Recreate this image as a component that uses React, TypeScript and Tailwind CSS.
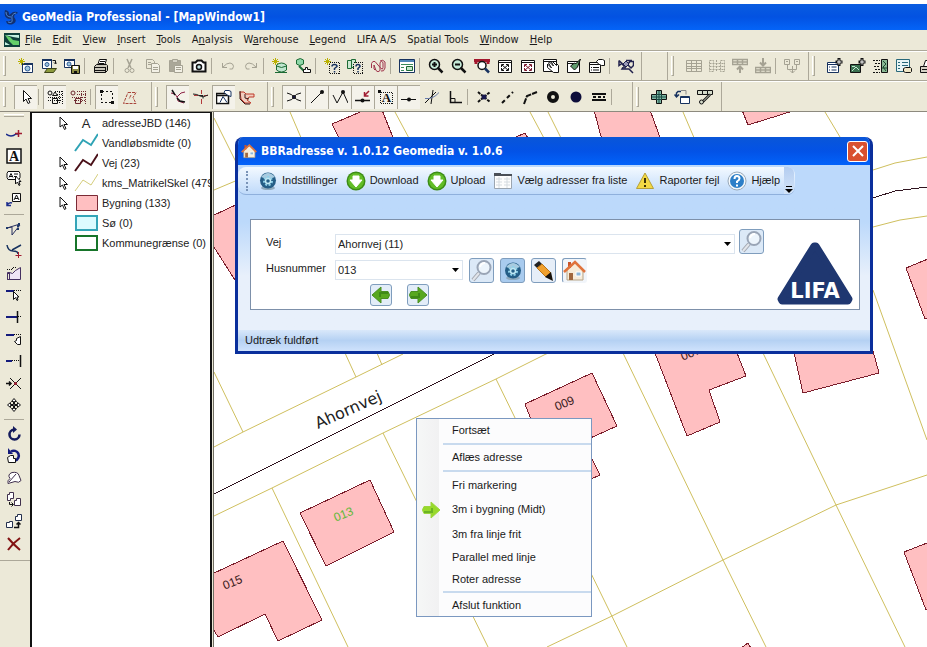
import type { ReactNode } from "react";

const Dots = ({ d }: { d: string }) => <path d={d} strokeDasharray="1 1" shapeRendering="crispEdges" />;

const globe = (
    <g>
        <path d="M4.500 5.500h10v9h-10z" fill="#fff" stroke="#17325f" />
        <path d="M4 6h11" stroke="#17325f" strokeWidth="2" />
        <circle cx="9.500" cy="10.500" r="2.500" stroke="#2d5a94" fill="#9fc4dc" />
    </g>
);

const star = <path d="M3.500 0v7M0 3.500h7M1 1l5 5M6 1L1 6" stroke="#b9b000" />;
const glass = <path d="M9.500 9.500l5 5" strokeWidth="2.500" />;

const icons: Record<string, ReactNode> = {
    New: <>{globe}{star}</>,
    Open: <><path d="M1.500 1.500h9v9h-9z" fill="#fff" stroke="#17325f" /><path d="M1 2h10" strokeWidth="2" stroke="#17325f" /><circle cx="6" cy="6.500" r="2" stroke="#2d5a94" fill="#9fc4dc" /><path d="M3.500 14.500l3-4h9l-3 4z" fill="#8c9a3c" stroke="#3d4418" /><path d="M11.500 2.500h3v3M13 4.500l1.500 1.500L16 4.500" /></>,
    Save: <><path d="M.5 1.500h10v8H.5z" fill="#fff" stroke="#17325f" /><path d="M0 2h11" strokeWidth="2" stroke="#17325f" /><circle cx="5" cy="6" r="2" stroke="#2d5a94" fill="#9fc4dc" /><path d="M7.500 7.500h8v8h-8z" fill="#8c8c45" /><path d="M9 8h5v3H9z" fill="#fff" stroke="none" /><path d="M10 13h3v2h-3z" fill="#111" stroke="none" /></>,
    Print: <><path d="M4.500 7.500L6.500 1.500h7l-2 6z" fill="#fff" /><path d="M1.500 8.500l2-2h10l1 1v5l-2 2h-11z" fill="#c9c6ba" /><path d="M1 9.500h12M7 3.500h5M6 5.500h5M1 12.500h12M12.500 9.500v5" /></>,
    Cut: <g stroke="#a5a293"><path d="M5 1l4 9M10 1L6 10" strokeWidth="1.500" /><circle cx="5" cy="12.500" r="2" /><circle cx="10" cy="12.500" r="2" /></g>,
    Copy: <g stroke="#a5a293"><path d="M1.500 1.500h6l2 2v7h-8z" /><path d="M6.500 5.500h6l2 2v7h-8z" fill="#f3f1e6" /><path d="M3 4.500h3M3 6.500h3M8 9.500h5M8 11.500h5" /></g>,
    Paste: <g stroke="#a5a293"><path d="M1.500 2.500h11v11h-11z" fill="#aaa798" /><path d="M4.500 1.500h5v3h-5z" fill="#d5d2c5" /><path d="M6.500 7.500h8v7h-8z" fill="#f3f1e6" /><path d="M8 9.500h5M8 11.500h5" /></g>,
    Camera: <><path d="M1.500 4.500h3l2-2h4l2 2h2v9h-13z" fill="#fff" strokeWidth="2" /><circle cx="8" cy="9" r="2.500" strokeWidth="1.500" fill="#c3e2e4" /></>,
    Undo: <path d="M2.500 5v4.500H7M2.500 9.500l4-3.500q4-2 6 0t0 5h-3" stroke="#a5a293" />,
    Redo: <path d="M13.500 5v4.500H9M13.500 9.500l-4-3.500q-4-2-6 0t0 5h3" stroke="#a5a293" />,
    Connect: <><path d="M4.500 7q5-4 10 0v5q-5 4-10 0z" fill="#bfe5cf" stroke="#1c6b35" /><path d="M4.500 8q5 3 10 0M3 14.500h12" stroke="#1c6b35" />{star}</>,
    Feature: <><path d="M1.500 2q4-3 7 0v4q-4 3-7 0z" fill="#8fd6a8" stroke="#1c6b35" /><path d="M4 8l5 5" stroke="#1c6b35" strokeWidth="2" /><path d="M8.500 14.500v-3h2v-2h2v2h3v3z" fill="#fff" /></>,
    Query: <><Dots d="M5.500 4.500h10v11h-10z" /><path d="M8 8.500q0-2 2.500-2t2.500 2l-2.500 2v1.500M10.500 13v1.500" stroke="#17325f" strokeWidth="1.500" />{star}</>,
    Queries: <><path d="M.5 2.500h4v8h-4zM4.500 1.500h4v8h-4z" stroke="#1c6b35" fill="#cbe8d2" /><path d="M7 5h8v10H7z" fill="#ece9d8" stroke="none" /><Dots d="M6.500 4.500h9v11h-9z" /><path d="M9 8.500q0-2 2-2t2 2l-2 2v1.500M11 13v1.500" stroke="#17325f" strokeWidth="1.500" /></>,
    Link: <path d="M1.500 10V5.500q1-3 3.500-2l6 7q2 1.500 2-1V4.500q-1.500-2-3 0v8q-2 2.500-4 0L4 7v4q1 2 2 0M10 3q3-2 5 1v6q-1 4-4 3" stroke="#a0334a" />,
    Legend: <><path d="M.5 1.500h15v13H.5z" fill="#fff" stroke="#17325f" /><path d="M1 3h14" stroke="#4f86b8" strokeWidth="2" /><path d="M2 6.500h12M2 9.500h3M2 12.500h3" stroke="#3b8a5a" /><path d="M7.500 8.500h6v4h-6z" fill="#c7e5cc" stroke="#1c6b35" /></>,
    ZoomIn: <><circle cx="6.500" cy="6.500" r="5" strokeWidth="1.500" fill="#c5ead8" />{glass}<path d="M6.500 4v5M4 6.500h5" strokeWidth="2" /></>,
    ZoomOut: <><circle cx="6.500" cy="6.500" r="5" strokeWidth="1.500" fill="#c5ead8" />{glass}<path d="M4 6.500h5" strokeWidth="2" /></>,
    ZoomArea: <><path d="M0 2.500h16M2 1v5M14 1v5" stroke="#a3182e" strokeWidth="3" /><circle cx="8" cy="7.500" r="4" fill="#fff" strokeWidth="1.500" /><path d="M11 10.500l4 4" strokeWidth="2.500" stroke="#17325f" /></>,
    Fit: <><path d="M1.500 2.500h13v12h-13zM1 4.500h14" fill="#fff" /><path d="M5 7l6 5M11 7l-6 5M4.500 9V6.500H7M9 6.500h2.500V9M4.500 10v2.500H7M11.500 10v2.500H9" /></>,
    FitAll: <><path d="M1.500 2.500h13v12h-13zM1 4.500h14" fill="#fff" /><path d="M5 7l6 5M11 7l-6 5M4.500 9V6.500H7M9 6.500h2.500V9M4.500 10v2.500H7M11.500 10v2.500H9" stroke="#7c1b30" /></>,
    Pan: <><path d="M.5 1.500h13v12H.5zM1 3.500h12" fill="#fff" /><path d="M4.500 6l4 4-3-5 1-1 4 4-2-4 1-.5 4 4v-2l2 2v7h-5l-6-5z" fill="#fff" /></>,
    Redraw: <><path d="M1.500 3.500h12v11h-12zM1 5.500h12" fill="#fff" /><path d="M4.500 8l4 4 3-3 3-8-5 5-1-1z" fill="#5f9a6c" /></>,
    Properties: <><path d="M.5 4.500h11v10H.5zM1 6.500h10" fill="#fff" /><path d="M2 9.500h1M4 9.500h6M2 12h1M4 12h6" /><path d="M7.500 3.500l2-2h4l2 1v5h-3l-3-1.500z" fill="#fff" /></>,
    Measure: <><path d="M1 2.500v5l3-2 3 4 5-6h3.500v4L13 10 8 5 4 11l7 0 4 4M1 2.500l4 4M8 2.500h6" stroke="#22224d" strokeWidth="1.500" /><path d="M5 6l3-3 3 3-3 3z" fill="#9a9ab8" stroke="#22224d" /></>,
    Table: <path d="M.5 2.500h15v11H.5zM.5 5.500h15M.5 8.500h15M.5 10.500h15M5.500 3v10M10.500 3v10" stroke="#a5a293" />,
    Columns: <path d="M.5 2.500h4v11h-4zM11.500 2.500h4v11h-4zM.5 5.500h15M.5 8.500h15M.5 11.500h15M7.500 2v12" stroke="#a5a293" strokeDasharray="2 1" />,
    RowUp: <g stroke="#a5a293"><path d="M.5 1.500h15v5H.5zM.5 4h15M5.500 2v4M10.500 2v4" strokeWidth="1.500" /><path d="M8 9v6M5 11.500l3-3 3 3" strokeWidth="2" /></g>,
    RowDown: <g stroke="#a5a293"><path d="M.5 9.500h15v5H.5zM.5 12h15M5.500 10v4M10.500 10v4" strokeWidth="1.500" /><path d="M8 0v7M5 4.500l3 3 3-3" strokeWidth="2" /></g>,
    Join: <path d="M.5 1.500h5v5h-5zM10.500 1.500h5v5h-5zM3.500 7v4.500h9V7M8.500 8v7M6 12.500l2.500 2.500 2.500-2.500M2 3.500h2M12 3.500h2" stroke="#a5a293" />,
    AddList: <><path d="M.5 4.500h11v10H.5zM1 6.500h10" fill="#fff" stroke="#17325f" /><path d="M2 9h1M4.500 9h5M2 12h1M4.500 12h5" stroke="#17325f" /><path d="M12 0v8M8.500 4h7" strokeWidth="3" /><path d="M12 1.500v5M10 4h4.500" stroke="#fff" /></>,
    AddImage: <><path d="M.5 6.500h10v8H.5z" fill="#3a7050" /><path d="M2 13l4-4 3 3M2 8.500h3" stroke="#bfe5cf" /><path d="M12 0v8M8.500 4h7" strokeWidth="3" /><path d="M12 1.500v5M10 4h4.500" stroke="#fff" /></>,
    Align: <><path d="M0 2.500h7M2 5.500h5M1 8.500h6M2 11.500h5M0 14.500h7" strokeDasharray="2 1" /><path d="M8.500 1.500h6v13h-6z" fill="#8ab894" /><path d="M10 3l3 3-3 3 3 4M9 10h5" stroke="#1d4a2c" /></>,
    FormList: <><path d="M.5 1.500h13v12H.5z" fill="#e8f5f5" stroke="#28687a" /><path d="M2 4.500h2M6 4.500h6M2 7.500h2M6 7.500h6M2 10.500h2" stroke="#28687a" /><path d="M7.500 10.500l2-1h5l1 1v3l-1 1h-5l-2-1z" fill="#eee5c5" /></>,
    PrintSet: <><path d="M4.500 8.500l2-6h6l-1 6z" fill="#fff" /><path d="M1.500 8.500h13v6h-13zM3 11.500h9" fill="#d5d2c5" /></>,
    Cursor: <path d="M5.500 1.500v11l2.500-2.500 2 4.500 2-1-2-4h3.500z" fill="#fff" />,
    SelectSet: <><circle cx="3" cy="4" r="2" /><path d="M8 3l2.500 3.500h-5zM5.500 9.500h5v5h-5z" /><Dots d="M8 2.500h8M15.500 2v13M10 5.500h6M1 8.500h14M1 11.500h14M12.500 3v12" /></>,
    SelectRed: <g stroke="#6e2a30"><circle cx="3" cy="4" r="2" /><path d="M5.500 9.500h5v5h-5z" /><Dots d="M7 2.500h9M7 5.500h9M15.500 2v13M2 8.500h14M4 11.500h11M11.500 4v9" /></g>,
    Fence: <><path d="M2.500 2.500h11v11h-11z" strokeDasharray="2 2" shapeRendering="crispEdges" /><path d="M1 1h3v3H1zM12 12h3v3h-3z" fill="#111" stroke="none" /></>,
    Poly: <path d="M6 3.500h8l-3 5 3 6H1.500zM9 6l-2 4" stroke="#a8443a" strokeDasharray="3 1" />,
    SnapCurve: <><path d="M1 4l4 1 2 3 4-4 4-1M7 8l1 4 6 2" stroke="#8c2045" /><path d="M2 1l3 5M7 9l3 3 5 1" strokeWidth="1.500" /></>,
    SnapCross: <><path d="M8.500 1v4M8.500 10v5M1 6.500h4M11 6.500h4" stroke="#b33a3a" /><path d="M0 5q4 0 7 2t8-1M6 6.500h4v3" stroke="#222" /></>,
    SnapProps: <><path d="M.5 4.500h12v10H.5zM1 6.500h11" fill="#fff" strokeWidth="1.500" /><path d="M4 13.500l3-6 4 6M8 3.500l1-2h4l2 1v5l-3-1z" fill="#fff" stroke="#17325f" /></>,
    Region: <><path d="M1 3h4l2 2h8v3h-5l-2 3 4 3H6l-4-4z" stroke="#bf3a2a" fill="#f1cdbf" /><path d="M1 2v8l5 5h5M6 5v4l4 1" stroke="#3a1a18" /></>,
    SnapX: <><path d="M1 4q5 1 7 4t7 4M1 12q6-1 7-4t7-4" /><circle cx="8" cy="8" r="1.500" fill="#17174d" /></>,
    SnapEnd: <><path d="M2 14L13 3" /><circle cx="13" cy="3" r="2" fill="#111" stroke="none" /></>,
    SnapVertex: <><path d="M1 6l4 8 6-11 5 11" /><circle cx="11" cy="3" r="2" fill="#111" stroke="none" /></>,
    SnapNear: <><path d="M0 11.500h15" strokeWidth="1.500" /><circle cx="7.500" cy="11.500" r="2" fill="#111" stroke="none" /><path d="M14 2L9.500 6.500M9.500 3v4h4" stroke="#a01b30" strokeWidth="1.500" /></>,
    SnapText: <><Dots d="M2.500 3.500h12v11h-12z" /><path d="M0 1h3v3H0z" fill="#111" stroke="none" /><text x="8.500" y="13" textAnchor="middle" fontFamily="Liberation Serif, serif" fontWeight="bold" fontSize="13" fill="#111" stroke="none">A</text></>,
    SnapMid: <><path d="M0 10.500h15" /><circle cx="8" cy="10.500" r="2" fill="#111" stroke="none" /></>,
    SnapTangent: <><path d="M1 14L12 3M9 1L7 15" /><path d="M1 9.500q8 1 14-6" stroke="#6579a9" /></>,
    SnapPerp: <><path d="M3.500 2v11.500H15" strokeWidth="1.500" /><path d="M4 9.500h4v4" /></>,
    Cross: <><path d="M2 3l12 10M2 13L14 3" strokeWidth="2" strokeDasharray="3 1" /><circle cx="8" cy="8" r="2.500" fill="#17174d" stroke="none" /></>,
    Segment: <path d="M3 14L14 3" strokeWidth="2" strokeDasharray="4 3" />,
    Elbow: <path d="M2 15L5 7l10-4" strokeWidth="2" strokeDasharray="6 1" />,
    Ring: <circle cx="8" cy="8" r="4" strokeWidth="4" />,
    Disc: <circle cx="8" cy="8" r="5.500" fill="#0d0d3a" stroke="none" />,
    Bars: <><path d="M1 5h14M1 11h14" strokeWidth="2" /><path d="M2 8h12" strokeWidth="2" strokeDasharray="3 2" /></>,
    Move3: <><path d="M5.500 1.500h5v4h5v5h-5v4h-5v-4h-5v-5h5z" fill="#7db6a3" /><path d="M1 8h14M8 2v12M5.500 5.500h5v5h-5z" stroke="#1a4a44" /></>,
    Swap: <><path d="M6.500 7.500h9v7h-9zM6.500 8.500h9" fill="#fff" stroke="#17325f" /><path d="M7 2.500H4L2.500 4v4M.5 5.500l2 2.500 2.500-2.500" stroke="#17325f" strokeWidth="1.500" /><path d="M7 1.500h5v4" stroke="#8a8a88" /></>,
    Chain: <><path d="M.5 1.500h5v4h-5zM5.500 1.500h5v4h-5zM10.500 1.500h5v4h-5z" fill="#d6dccb" /><path d="M13 5.500l-7 7" strokeWidth="2.500" /><path d="M13 5.500l-7 7" stroke="#d6dccb" /><circle cx="4.500" cy="13" r="2" fill="#d6dccb" /></>,
    EditLine: <><path d="M0 8q5 4 10 0h2" stroke="#1c2d8c" strokeWidth="1.500" /><path d="M12.500 4v7M9 7.500h7" stroke="#a01b30" strokeWidth="1.500" /></>,
    TextBox: <><path d="M1 1h14v14H1z" fill="#fff" strokeWidth="1.500" /><text x="8" y="13" textAnchor="middle" fontFamily="Liberation Serif, serif" fontWeight="bold" fontSize="14" fill="#111" stroke="none">A</text></>,
    TextSelect: <><path d="M2 1.500h11l1 2v4l-1 2H2l-1-2v-4z" fill="#fff" /><path d="M3 7.500l2-4 2 4M4 6.500h2M8 4h4M8 6.500h3" /><path d="M9.500 6v8l2-2 1.500 3.500 1-.5-1-3.500H15z" fill="#fff" /></>,
    Leader: <><path d="M6.500 1.500h8v8h-8z" fill="#fff" /><path d="M8 8l2.500-5L13 8M9 6.500h3" /><path d="M6 11q-3-1-5 2M1 10v3.500h4" stroke="#1c2d8c" strokeWidth="1.500" /></>,
    Vertex: <><path d="M1 7l5-1v8M6 14l8-10M1 7l13-4" stroke="#283060" /><path d="M12 9V3h3M0 7h3" strokeWidth="2" stroke="#203a6b" strokeDasharray="2 1" /></>,
    Curve: <><path d="M1 2q1 6 6 6t5 3M6 7l9-5" stroke="#17325f" strokeWidth="1.500" /><path d="M12.500 9v6M9.500 12.500h6" stroke="#a01b30" /></>,
    Area: <><path d="M1.500 7.500l2 0v7h-2zM1.500 14.500h13v-12l-5 3-3 3-3-1-2 2z" fill="#f0e6f5" stroke="#453061" /><Dots d="M1 4.500h5V2h5" /></>,
    Trim: <><path d="M0 4h8" stroke="#141b7c" strokeWidth="2" /><Dots d="M8 3.500h8" /><path d="M7.500 4.500v8l2-2 1.500 3 1-.5-1-3h2z" fill="#fff" /></>,
    Extend: <><path d="M0 8h11" stroke="#141b7c" strokeWidth="2" /><path d="M11.500 2v12" strokeWidth="1.500" /><Dots d="M12 7.500h4" /></>,
    Split: <><path d="M0 4h8" stroke="#141b7c" strokeWidth="2" /><Dots d="M8 3.500h8" /><path d="M10.500 7.500l4-2v8h-3l-3-3 2-1z" fill="#fff" /></>,
    ExtendTo: <><path d="M0 8h6" stroke="#141b7c" strokeWidth="2" /><Dots d="M6 7.500h8" /><path d="M14.500 2v12" strokeWidth="1.500" /></>,
    Break: <><path d="M4 3l11 11M15 3L4 14" /><path d="M0 8.500h5M3 6.500l2 2-2 2" strokeWidth="1.500" /><circle cx="9.500" cy="8.500" r="1.500" fill="#a01b30" stroke="none" /></>,
    MoveAll: <path d="M8 1.500l2.500 3h-2v3h3v-2l3 2.500-3 2.500v-2h-3v3h2L8 14.500l-2.500-3h2v-3h-3v2L1.500 8l3-2.500v2h3v-3h-2z" fill="#fff" />,
    Rotate: <><path d="M8 3.500a5 5 0 1 0 5.500 5" stroke="#141b5c" strokeWidth="2.500" /><path d="M7 0v7l4-3.500z" fill="#141b5c" stroke="none" /></>,
    RotateCopy: <><path d="M5 3.500a5 5 0 1 1 4 9" stroke="#141b7c" strokeWidth="2.500" /><path d="M2 0v6h5z" fill="#141b7c" stroke="none" /><path d="M1.500 9.500l3-2h3v3h2v4h-7z" fill="#fff" /></>,
    Reshape: <><path d="M2 13.500q-1-3 2-5-3-4 2-6 6-1 7 3l2 5q-2 3-6 1z" stroke="#40304d" fill="#fff" /><path d="M3 12l7-8" stroke="#40304d" /></>,
    CopyShape: <><path d="M1.500 2.500h2v-2h4v6h-3v2h-3zM8.500 8.500h2v-2h4v7h-6z" fill="#fff" stroke="#40304d" /><path d="M3.500 10v2.500H7M5.500 10.500l2 2-2 2" /></>,
    MoveShape: <><path d="M.5 8.500h3v-1h3v6h-6zM9.500 2.500h2v-2h4v6h-6z" fill="#fff" stroke="#24304d" /><path d="M8 13.500h4.500V9M10.500 10.500l2-2 2 2" strokeWidth="1.500" /></>,
    Delete: <path d="M2 2q5 6 12 12M14 2Q7 7 2 14" stroke="#831313" strokeWidth="2" />,
};

function Icon({ name }: { name: string }) {
    return (
        <svg className="size-4 shrink-0" viewBox="0 0 16 16" fill="none" stroke="#111" aria-hidden="true">
            {icons[name]}
        </svg>
    );
}

// "|" draws a separator, a leading "*" a pressed button
function Tools({ items, vertical }: { items: string[]; vertical?: boolean }) {
    return (
        <>
            {items.map((item, i) => {
                if (item === "|") {
                    return vertical
                        ? <div key={i} className="mx-1 my-[3px] h-px w-5 shrink-0 bg-[#aca899]" />
                        : <div key={i} className="mr-1 ml-px h-4 w-px shrink-0 bg-[#aca899]" />;
                }
                const pressed = item.startsWith("*");
                const name = item.replace("*", "");
                const size = vertical ? "h-[22px] w-7" : "h-6 w-[23px]";
                const look = pressed ? "border-t border-l border-[#aca899] bg-[#f4f2ea]" : "";
                return (
                    <button key={i} type="button" aria-label={name} className={`flex shrink-0 items-center justify-center ${size} ${look}`}>
                        <Icon name={name} />
                    </button>
                );
            })}
        </>
    );
}

function Band({ items, className }: { items: string[]; className: string }) {
    return (
        <div className={`flex h-full shrink-0 items-center border-r border-[#aca899] ${className}`}>
            <div className="mr-2 ml-[3px] h-5 w-[3px] border-r border-b border-l border-r-[#aca899] border-b-[#aca899] border-l-white" />
            <Tools items={items} />
        </div>
    );
}

const menus = [
    ["", "F", "ile"], ["", "E", "dit"], ["", "V", "iew"], ["", "I", "nsert"], ["", "T", "ools"], ["A", "n", "alysis"],
    ["W", "a", "rehouse"], ["", "L", "egend"], ["LIFA A/S", "", ""], ["Spatial Tools", "", ""], ["", "W", "indow"], ["", "H", "elp"],
];

const Arrow = () => (
    <svg className="h-4 w-3" viewBox="0 0 12 16" fill="#fff" stroke="#111" aria-hidden="true">
        <path d="M2 2v10l2.500-2 2 4.500 1.500-1-2-4h3.500z" />
    </svg>
);

const layers = [
    { label: "adresseJBD (146)", arrow: true, kind: "text", color: "#222", fill: "none" },
    { label: "Vandløbsmidte (0)", arrow: false, kind: "line", color: "#2fa3b5", fill: "none" },
    { label: "Vej (23)", arrow: true, kind: "line", color: "#4a1018", fill: "none" },
    { label: "kms_MatrikelSkel (479)", arrow: true, kind: "thin", color: "#d5cd7c", fill: "none" },
    { label: "Bygning (133)", arrow: true, kind: "box", color: "#7a2a35", fill: "#ffbfc1" },
    { label: "Sø (0)", arrow: false, kind: "thick", color: "#35a5b8", fill: "#dcfbff" },
    { label: "Kommunegrænse (0)", arrow: false, kind: "thick", color: "#17752a", fill: "#fff" },
];

function LegendPanel() {
    return (
        <aside className="w-[182px] shrink-0 overflow-hidden border-x-2 border-t border-[#111] bg-white">
            {layers.map((l) => (
                <div key={l.label} className="flex h-5 items-center pl-[26px] text-[11px] whitespace-nowrap text-[#222]">
                    <div className="w-4 shrink-0">{l.arrow && <Arrow />}</div>
                    <svg className="mr-1 h-5 w-6 shrink-0" viewBox="0 0 24 20" fill={l.fill} stroke={l.color} aria-hidden="true">
                        {l.kind === "text" && <text x="12" y="15" textAnchor="middle" fontSize="13" fill={l.color} stroke="none">A</text>}
                        {l.kind === "line" && <path d="M1 18l8-11 8 5 7-11" strokeWidth="2" />}
                        {l.kind === "thin" && <path d="M1 18l8-11 8 5 7-11" />}
                        {l.kind === "box" && <path d="M2.500 2.500h21v15h-21z" />}
                        {l.kind === "thick" && <path d="M2 3h21v14H2z" strokeWidth="2" />}
                    </svg>
                    <span>{l.label}</span>
                </div>
            ))}
        </aside>
    );
}

const parcels = [
    "M214 447L243 432 356 377 403 354M214 372L243 432M345 353L356 377M377 353L382 365",
    "M214 516L272 488 383 433 496 379 546 354 873 227 900 220 927 216",
    "M272 488L348 647M383 433L488 647M496 379L627 647",
    "M547 647L612 616 723 560 836 505 927 475",
    "M623 353L723 560 766 647M763 353L836 505 905 647M873 290L927 440",
    "M214 190L290 158M214 118L240 170M290 112L302 140M395 112L410 140M530 112L545 140M548 112L562 140M683 112L695 140M825 112L840 137",
    "M873 170L895 163 927 157",
];

const buildings = [
    "M300 513L370 480 394 532 326 566z",
    "M212 574L283 541 322 620 278 641 265 614 218 637 212 627z",
    "M525 404L592 373 617 426 546 458z",
    "M580 436L600 475 580 484z",
    "M650 340L687 436 720 422 709 390 746 376 730 335z",
    "M790 335L803 393 879 373 870 340z",
    "M940 254L906 268 925 319 940 314z",
    "M940 538L904 552 926 610 940 605z",
    "M738 650L748 643 752 650z",
    "M332 124L365 110H382L394 140H340z",
    "M594 110H650L661 140H602z",
    "M742 110L748 125 796 110z",
    "M212 216L240 203V288L212 244z",
    "M505 142L525 133 530 142z",
];

function MapView() {
    return (
        <svg className="absolute inset-0 h-full w-full" fill="none" aria-label="Kort">
            <g transform="translate(-214 -112)">
                {parcels.map((d) => <path key={d} d={d} stroke="#cfbf5e" />)}
                {buildings.map((d) => <path key={d} d={d} fill="#ffbfc1" stroke="#7a1e2c" shapeRendering="crispEdges" />)}
                <path d="M214 494L410 396 494 354 820 215 873 198 895 191 927 187" stroke="#301520" shapeRendering="crispEdges" />
                <g fontFamily="Liberation Sans, sans-serif" fontSize="12" textAnchor="middle" fill="#3b1a20">
                    <text transform="translate(566 407) rotate(-22)">009</text>
                    <text transform="translate(345 518) rotate(-22)" fill="#62b83a">013</text>
                    <text transform="translate(234 586) rotate(-22)">015</text>
                    <text transform="translate(692 357) rotate(-22)">007</text>
                </g>
                <text transform="translate(318 429) rotate(-24)" fontFamily="DejaVu Sans, sans-serif" fontSize="16" fill="#222">Ahornvej</text>
            </g>
        </svg>
    );
}

const Gear = () => (
    <svg className="size-5" viewBox="0 0 20 20" aria-hidden="true">
        <ellipse cx="10" cy="17" rx="7" ry="2" fill="#8fa9bd" />
        <circle cx="10" cy="9.500" r="8" fill="#245d86" />
        <path d="M3 6q7-8 14 0-7 3-14 0z" fill="#a8cbe0" />
        <circle cx="10" cy="10" r="4" fill="none" stroke="#8ed0e8" strokeWidth="2" strokeDasharray="2 1.500" />
        <circle cx="10" cy="10" r="2.500" fill="#245d86" stroke="#bfe8f4" strokeWidth="1.500" />
    </svg>
);

const Down = () => (
    <svg className="size-5" viewBox="0 0 20 20" aria-hidden="true">
        <circle cx="10" cy="10" r="9.500" fill="#3c8c16" />
        <circle cx="10" cy="10" r="8" fill="#62bd27" />
        <path d="M7 5h6v4h3l-6 7-6-7h3z" fill="#fff" stroke="#fff" strokeLinejoin="round" />
    </svg>
);

const Sheet = () => (
    <svg className="size-5" viewBox="0 0 20 20" aria-hidden="true">
        <path d="M1.500 4.500h17v13h-17z" fill="#fdfdfd" stroke="#9ba5b0" />
        <path d="M1 2h7v3H1zM8 3h11v2H8z" fill="#4a4f57" />
        <path d="M3 8h6M3 11h6M3 14h6M11 8h6M11 11h6M11 14h6M6 6v11M14 6v11" stroke="#d5dbe0" />
    </svg>
);

const Warning = () => (
    <svg className="size-5" viewBox="0 0 20 20" aria-hidden="true">
        <path d="M10 2L1.500 17.500h17z" fill="#f3d943" stroke="#b5a03a" strokeLinejoin="round" />
        <path d="M10 7v5M10 14v2" stroke="#3d3206" strokeWidth="2" />
    </svg>
);

const Help = () => (
    <svg className="size-5" viewBox="0 0 20 20" aria-hidden="true">
        <circle cx="10" cy="10" r="9" fill="#f4f8fb" stroke="#98a8b8" />
        <circle cx="10" cy="10" r="7" fill="#2d7fc8" />
        <path d="M7.500 8q0-3 2.500-3t2.500 2.500q0 1.500-2.500 3V12M10 13.500v2" fill="none" stroke="#fff" strokeWidth="2" />
    </svg>
);

const Magnifier = () => (
    <svg className="size-[23px]" viewBox="0 0 23 23" aria-hidden="true">
        <path d="M9 14l-6 7" stroke="#a2a7b0" strokeWidth="4" />
        <path d="M9 14l-6 7" stroke="#e2e5ea" strokeWidth="2" />
        <circle cx="14" cy="8.500" r="6.500" fill="#edf5fc" stroke="#9aa5b6" strokeWidth="2" />
        <path d="M10 8q1-4 5-4" fill="none" stroke="#fff" strokeWidth="2" />
    </svg>
);

const Pencil = () => (
    <svg className="size-[23px]" viewBox="0 0 23 23" aria-hidden="true">
        <path d="M2 6l5-4 4 4-5 4z" fill="#222" />
        <path d="M5 9l5-4 9 9-5 4z" fill="#f0a02e" stroke="#b97316" />
        <path d="M13 18l6-5 2 9z" fill="#17110a" />
    </svg>
);

const House = ({ className }: { className: string }) => (
    <svg className={className} viewBox="0 0 23 23" aria-hidden="true">
        <path d="M4 11l8-7 8 7v10H4z" fill="#f7ecd9" stroke="#b7a588" />
        <path d="M5 3h3v6H5z" fill="#c9552c" />
        <path d="M1 13L12 3l10 10" fill="none" stroke="#e0743d" strokeWidth="2.500" />
        <path d="M6 14h4v7H6z" fill="#a0673d" />
        <path d="M13 13h5v4h-5z" fill="#8fb8d8" stroke="#fff" />
    </svg>
);

const GreenArrow = ({ flip, bright }: { flip?: boolean; bright?: boolean }) => (
    <svg className={flip ? "h-5 w-5 rotate-180" : "h-5 w-5"} viewBox="0 0 20 20" aria-hidden="true">
        <path d="M3 6.500h7V2l9 8-9 8v-4.500H3q-3-3.500 0-7z" fill={bright ? "#97d92b" : "#58a820"} stroke={bright ? "#9bd63c" : "#4a8f22"} />
        <path d="M3 12h8V8" fill="none" stroke={bright ? "#6bb324" : "#3f8a18"} strokeWidth="2" />
    </svg>
);

const strip = [
    { label: "Indstillinger", icon: <Gear /> },
    { label: "Download", icon: <Down /> },
    { label: "Upload", icon: <Down /> },
    { label: "Vælg adresser fra liste", icon: <Sheet /> },
    { label: "Raporter fejl", icon: <Warning /> },
    { label: "Hjælp", icon: <Help /> },
];

function ToolButton({ label, className, children }: { label: string; className: string; children: ReactNode }) {
    return (
        <button type="button" aria-label={label} className={`flex shrink-0 items-center justify-center rounded-[3px] border border-[#7f9dbd] ${className}`}>
            {children}
        </button>
    );
}

function Combo({ id, value, className }: { id: string; value: string; className: string }) {
    return (
        <div className={`relative h-5 ${className}`}>
            <select id={id} className="h-full w-full appearance-none border border-[#dbe4ee] bg-white px-[2px] text-[11px] text-[#222]">
                <option>{value}</option>
            </select>
            <svg className="pointer-events-none absolute top-2 right-1 h-1 w-[7px]" viewBox="0 0 7 4" aria-hidden="true">
                <path d="M0 0h7L3.500 4z" fill="#000" />
            </svg>
        </div>
    );
}

function AddressDialog() {
    return (
        <section className="absolute top-[25px] left-[21px] flex h-[217px] w-[638px] flex-col overflow-hidden rounded-t-lg border-x-[3px] border-b-[3px] border-[#0a2f9c] bg-[#bcd9fb]">
            <header className="-mx-[2px] flex h-7 shrink-0 items-center bg-linear-to-b from-[#0a56d8] via-[#0352e6] to-[#0262fa] pr-1 pl-[5px]">
                <House className="size-4" />
                <h2 className="ml-1 flex-1 font-['DejaVu_Sans_Condensed','DejaVu_Sans',sans-serif] text-xs font-bold text-white">BBRadresse v. 1.0.12 Geomedia v. 1.0.6</h2>
                <button type="button" aria-label="Luk" className="flex size-[21px] items-center justify-center rounded-[3px] border border-white bg-[#d9512f]">
                    <svg className="size-3" viewBox="0 0 12 12" stroke="#fff" strokeWidth="2" aria-hidden="true"><path d="M1 1l10 10M11 1L1 11" /></svg>
                </button>
            </header>
            <nav className="mt-[2px] flex h-7 w-[557px] shrink-0 items-center rounded-lg border-b border-[#8fb0dc] bg-linear-to-b from-[#f3f9ff] to-[#bfdafa] pl-2">
                <div className="mr-[10px] h-5 border-l-2 border-dotted border-[#7a94b8]" />
                {strip.map((s) => (
                    <button key={s.label} type="button" className="mr-2 flex shrink-0 items-center gap-1 whitespace-nowrap">
                        {s.icon}
                        <span>{s.label}</span>
                    </button>
                ))}
                <button type="button" aria-label="Mere" className="-ml-1 flex h-full w-[10px] shrink-0 flex-col items-center justify-end rounded-r-md bg-linear-to-b from-[#b4cdf0] to-[#d3e4f8]">
                    <svg className="h-2 w-2" viewBox="0 0 8 8" aria-hidden="true"><path d="M1 0h6v1H1zM0 3h8L4 7z" fill="#000" /></svg>
                </button>
            </nav>
            <div className="flex flex-1 flex-col bg-linear-to-b from-[#bcd9fb] from-20% to-[#e8f0fb] to-60% pt-6">
                <form className="mr-[10px] ml-3 flex h-[91px] border border-[#7d90aa] bg-white">
                    <div className="flex flex-1 flex-col pt-[9px] pl-[15px]">
                        <div className="flex h-[29px]">
                            <label htmlFor="vej" className="w-[69px] pt-[5px]">Vej</label>
                            <Combo id="vej" value="Ahornvej (11)" className="mt-[5px] w-[400px]" />
                            <ToolButton label="Søg vej" className="ml-1 size-[25px] bg-[#dce9f7]"><Magnifier /></ToolButton>
                        </div>
                        <div className="flex h-[26px] items-start">
                            <label htmlFor="nr" className="w-[69px] pt-[2px]">Husnummer</label>
                            <Combo id="nr" value="013" className="mt-[2px] w-32" />
                            <div className="ml-[6px] flex gap-[6px]">
                                <ToolButton label="Søg nummer" className="size-[25px] bg-[#dce9f7]"><Magnifier /></ToolButton>
                                <ToolButton label="Indstil" className="size-[25px] bg-[#a9cbee]"><Gear /></ToolButton>
                                <ToolButton label="Rediger" className="size-[25px] bg-[#e6eef8]"><Pencil /></ToolButton>
                                <ToolButton label="Hus" className="size-[25px] border-r-transparent border-b-transparent bg-[#f1f5fa]"><House className="size-[23px]" /></ToolButton>
                            </div>
                        </div>
                        <div className="ml-[104px] flex gap-[15px]">
                            <ToolButton label="Forrige" className="size-[22px] bg-[#e3edf8]"><GreenArrow flip /></ToolButton>
                            <ToolButton label="Næste" className="size-[22px] bg-[#e3edf8]"><GreenArrow /></ToolButton>
                        </div>
                    </div>
                    <svg className="mt-[22px] mr-[5px] h-16 w-[78px] shrink-0" viewBox="0 0 78 64" role="img" aria-label="LIFA">
                        <path d="M38 4h2l33 53-1 2H6l-1-2z" fill="#1f3770" stroke="#1f3770" strokeWidth="7" strokeLinejoin="round" />
                        <text x="39" y="56" textAnchor="middle" fontFamily="DejaVu Sans, sans-serif" fontWeight="bold" fontSize="21" fill="#fff">LIFA</text>
                    </svg>
                </form>
            </div>
            <footer className="flex h-[21px] shrink-0 items-center bg-linear-to-b from-[#d9e8fa] via-[#b5d1f3] to-[#cfe2fc] pl-[7px]">Udtræk fuldført</footer>
        </section>
    );
}

const contextItems = [
    { label: "Fortsæt", className: "h-[23px]", line: true },
    { label: "Aflæs adresse", className: "h-[23px]", line: true },
    { label: "Fri markering", className: "h-6" },
    { label: "3m i bygning (Midt)", className: "h-[25px]", active: true },
    { label: "3m fra linje frit", className: "h-6" },
    { label: "Parallel med linje", className: "h-[22px]" },
    { label: "Roter adresse", className: "h-[22px]", line: true },
    { label: "Afslut funktion", className: "h-[22px]" },
];

function ContextMenu() {
    return (
        <menu className="absolute top-[306px] left-[202px] w-44 border border-[#7b98c0] bg-[#fcfcfd] bg-[linear-gradient(90deg,#f6f7f7,#f1f1f2_22px,transparent_22px)]">
            {contextItems.map((c) => (
                <li key={c.label}>
                    <button type="button" className={`flex w-full items-center ${c.className}`}>
                        <span className="flex w-[35px] shrink-0 pl-1">{c.active && <GreenArrow bright />}</span>
                        {c.label}
                    </button>
                    {c.line && <div className="mt-px mb-px ml-[26px] h-[2px] bg-[#c8daee]" />}
                </li>
            ))}
        </menu>
    );
}

export default function App() {
    return (
        <div className="flex h-screen flex-col overflow-hidden bg-[#ece9d8] font-['Liberation_Sans',Arial,sans-serif] text-[11px] text-[#1a1a1a]">
            <header className="flex h-[30px] shrink-0 items-center border-t-4 border-white bg-linear-to-b from-[#0a5ce0] via-[#0352e2] to-[#0464f8] pl-[3px]">
                <svg className="mr-[3px] size-4" viewBox="0 0 16 16" fill="none" aria-hidden="true">
                    <path d="M2 1q5 1 4 5l4-3q4-1 5 1-4 1-4 4 4 5-1 7-6 2-7-3 5 1 5-2Q0 10 2 1z" fill="#123070" />
                    <path d="M3 3q0 5 5 5M13 4q-5 1-4 6t-4 3" stroke="#4d86d0" />
                </svg>
                <h1 className="font-['DejaVu_Sans_Condensed','DejaVu_Sans',sans-serif] text-xs font-bold text-white">GeoMedia Professional - [MapWindow1]</h1>
            </header>
            <nav className="flex h-[21px] shrink-0 items-center border-b border-[#aca899] pl-1 font-['DejaVu_Sans_Condensed','DejaVu_Sans',sans-serif]">
                <svg className="mr-[5px] h-[14px] w-4" viewBox="0 0 16 14" aria-hidden="true">
                    <path d="M0 0h16v14H0z" fill="#10403c" />
                    <path d="M1 2l5 2 3 3 6 1v4H9L5 8z" fill="#65cf68" />
                    <path d="M1 2h14v3l-6-1zM1 9l5 3H1z" fill="#c4f0e0" />
                </svg>
                <div className="flex gap-[11px]">
                    {menus.map(([a, b, c]) => (
                        <button key={a + b + c} type="button" className="whitespace-nowrap">{a}<u>{b}</u>{c}</button>
                    ))}
                </div>
            </nav>
            <div className="flex h-[30px] shrink-0 items-center border-t border-b border-t-white border-b-[#aca899]">
                <Band className="w-[642px]" items={["New", "Open", "Save", "|", "Print", "|", "Cut", "Copy", "Paste", "Camera", "|", "Undo", "Redo", "|", "Connect", "Feature", "|", "Query", "Queries", "Link", "|", "Legend", "|", "ZoomIn", "ZoomOut", "ZoomArea", "Fit", "FitAll", "Pan", "Redraw", "Properties", "|", "Measure"]} />
                <div className="h-full w-[26px] shrink-0 border-r border-[#aca899]" />
                <Band className="w-[141px]" items={["Table", "Columns", "RowUp", "RowDown", "|", "Join"]} />
                <Band className="" items={["AddList", "AddImage", "Align", "FormList", "PrintSet"]} />
            </div>
            <div className="flex h-[31px] shrink-0 items-center border-t border-b border-t-white border-b-[#8d8a7e]">
                <Band className="w-[152px]" items={["*Cursor", "|", "*SelectSet", "SelectRed", "|", "*Fence", "Poly"]} />
                <Band className="w-[116px]" items={["*SnapCurve", "SnapCross", "*SnapProps", "Region"]} />
                <Band className="w-[365px]" items={["*SnapX", "*SnapEnd", "*SnapVertex", "*SnapNear", "*SnapText", "*SnapMid", "SnapTangent", "SnapPerp", "|", "Cross", "Segment", "Elbow", "Ring", "Disc", "Bars", "|"]} />
                <Band className="w-[89px]" items={["Move3", "Swap", "Chain"]} />
            </div>
            <main className="flex min-h-0 flex-1">
                <div className="w-[30px] shrink-0">
                    <div className="flex flex-col border-b border-[#aca899] pb-[5px]">
                        <div className="mx-1 mt-[2px] mb-[6px] h-[3px] w-5 border-t border-b border-t-white border-b-[#aca899]" />
                        <Tools vertical items={["EditLine", "TextBox", "TextSelect", "Leader", "|", "Vertex", "Curve", "Area", "Trim", "Extend", "Split", "ExtendTo", "Break", "MoveAll", "|", "Rotate", "RotateCopy", "Reshape", "CopyShape", "MoveShape", "Delete"]} />
                    </div>
                </div>
                <LegendPanel />
                <div className="w-[2px] shrink-0 border-r border-[#716f64]" />
                <div className="relative flex-1 overflow-hidden bg-white">
                    <MapView />
                    <AddressDialog />
                    <ContextMenu />
                </div>
            </main>
        </div>
    );
}
